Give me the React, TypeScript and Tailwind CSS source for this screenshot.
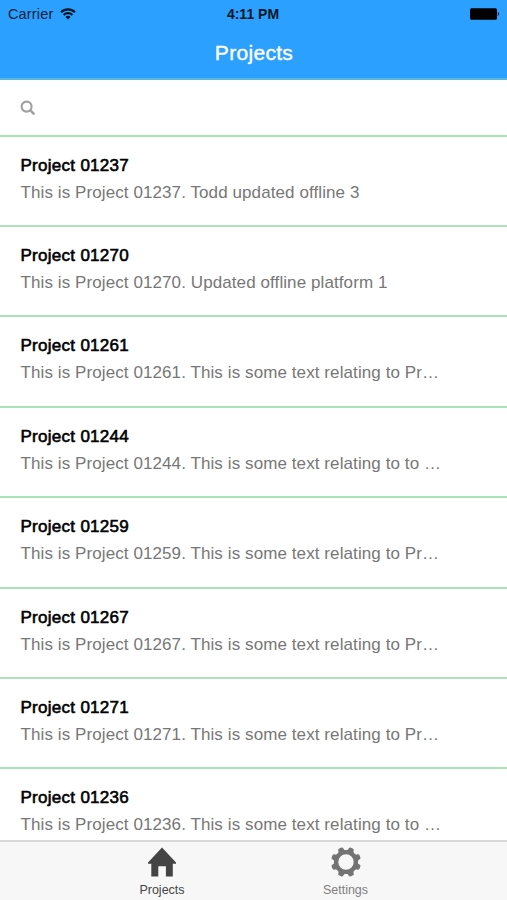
import React from 'react';

interface Project {
    id: string;
    text: string;
}

const projects: Project[] = [
    { id: '01237', text: 'Todd updated offline 3' },
    { id: '01270', text: 'Updated offline platform 1' },
    { id: '01261', text: 'This is some text relating to Pr…' },
    { id: '01244', text: 'This is some text relating to to …' },
    { id: '01259', text: 'This is some text relating to Pr…' },
    { id: '01267', text: 'This is some text relating to Pr…' },
    { id: '01271', text: 'This is some text relating to Pr…' },
    { id: '01236', text: 'This is some text relating to to …' },
];

const teeth = [22.5, 67.5, 112.5, 157.5, 202.5, 247.5, 292.5, 337.5];

const WifiIcon: React.FC = () => (
    <svg width="16" height="12" viewBox="0 0 16 12" fill="none" stroke="#041524" strokeWidth="2.1">
        <path d="M1 4.2a10 10 0 0 1 14 0" />
        <path d="M3.6 6.9a6.3 6.3 0 0 1 8.8 0" />
        <path d="M8 11.6 5.5 9a3.6 3.6 0 0 1 5 0z" fill="#041524" stroke="none" />
    </svg>
);

const BatteryIcon: React.FC = () => (
    <svg width="31" height="13" viewBox="0 0 31 13">
        <rect x="1" y="0.3" width="27" height="11.4" rx="1.5" fill="#000" />
        <path d="M28.8 4.1c1.8.3 1.8 3.5 0 3.8z" fill="#062540" />
    </svg>
);

const SearchIcon: React.FC = () => (
    <svg width="16" height="16" viewBox="0 0 16 16" fill="none" stroke="#a0a0a0">
        <circle cx="6.6" cy="6.6" r="5" strokeWidth="2.1" />
        <path d="m10.4 10.4 3.2 3.2" strokeWidth="2.6" strokeLinecap="round" />
    </svg>
);

const HomeIcon: React.FC = () => (
    <svg width="30" height="30" viewBox="0 0 30 30" fill="#444">
        <path d="M15 0.5 29 15.5v1.3h-3.2v12.7h-6.9V19.3h-7.6v10.2H4.3V16.8H1v-1.3z" />
    </svg>
);

const GearIcon: React.FC = () => (
    <svg width="30" height="30" viewBox="0 0 30 30" fill="#737373">
        <circle cx="15" cy="15" r="9.9" fill="none" stroke="#737373" strokeWidth="4.4" />
        {teeth.map((angle) => (
            <path key={angle} d="M10.4 4.8 12 3 12.3 1.2Q12.6 0 13.6 0h2.8q1 0 1.3 1.2L18 3l1.6 1.8z" transform={`rotate(${angle} 15 15)`} />
        ))}
    </svg>
);

const App: React.FC = () => {
    return (
        <div className="flex h-[900px] w-[507px] flex-col overflow-hidden bg-white font-['Liberation_Sans',sans-serif]">
            <header className="h-20 shrink-0 border-b-2 border-[#57b7dc] bg-[#2ba0ff]">
                <div className="grid h-7 grid-cols-3 items-center pr-[7px] pl-2 text-[#0b2238]">
                    <div className="flex items-center gap-[7px] text-[14.5px]">
                        <span className="pt-0.5 tracking-[0.15px]">Carrier</span>
                        <WifiIcon />
                    </div>
                    <div className="pr-[2px] text-center text-[14px] font-bold text-[#041524]">4:11 PM</div>
                    <div className="flex justify-end">
                        <BatteryIcon />
                    </div>
                </div>
                <h1 className="pt-[9px] pl-px text-center text-[21px] leading-8 tracking-[0.3px] text-white [-webkit-text-stroke:0.4px_white]">Projects</h1>
            </header>

            <div className="flex h-[54.8px] shrink-0 items-center pt-[2px] pl-5">
                <SearchIcon />
            </div>

            <ul className="min-h-0 flex-1 overflow-hidden">
                {projects.map((project) => (
                    <li key={project.id} className="h-[90.35px] border-t-2 border-[#ade1b7] pt-[15px] pl-[20.5px] whitespace-nowrap">
                        <h2 className="text-[17px] leading-[27px] tracking-[0.28px] text-black [-webkit-text-stroke:0.6px_black]">Project {project.id}</h2>
                        <p className="text-[17px] leading-[27px] tracking-[0.09px] text-[#777]">
                            This is Project {project.id}. {project.text}
                        </p>
                    </li>
                ))}
            </ul>

            <nav className="flex h-[60px] shrink-0 justify-center border-t-2 border-[#d8d8d8] bg-[#f7f7f7] text-[12.5px] leading-4">
                <a className="flex w-[183px] flex-col items-center pt-[5px] text-[#444]">
                    <HomeIcon />
                    <span className="pt-[5px]">Projects</span>
                </a>
                <a className="flex w-[183px] flex-col items-center pt-[5px] pl-px text-[#808080]">
                    <GearIcon />
                    <span className="pt-[5px]">Settings</span>
                </a>
            </nav>
        </div>
    );
};

export default App;
